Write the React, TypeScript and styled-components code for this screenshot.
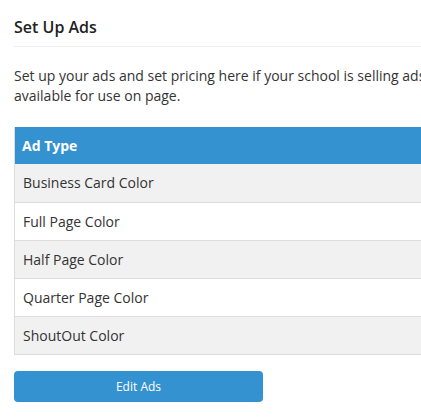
import React from "react";
import styled, { createGlobalStyle } from "styled-components";

const Global = createGlobalStyle`
  html, body { margin: 0; padding: 0; background: #fff; overflow: hidden; }
  body { font-family: "Open Sans", "Liberation Sans", sans-serif; }
`;

const Page = styled.div`
  width: 640px;
  padding: 16px 0 0 14px;
  box-sizing: border-box;
`;

const Title = styled.h2`
  margin: 0;
  font-size: 16px;
  line-height: 22px;
  font-weight: 600;
  color: #222;
`;

const Divider = styled.hr`
  margin: 8px 0 0 0;
  border: 0;
  border-top: 1px solid #eeeeee;
`;

const Intro = styled.p`
  margin: 19px 0 0 0;
  font-size: 14px;
  line-height: 20px;
  color: #333;
`;

const Table = styled.table`
  margin-top: 21px;
  width: 100%;
  border-collapse: collapse;
  border-left: 1px solid #dddddd;
  font-size: 14px;
  color: #333;
`;

const HeadCell = styled.th`
  background: #3592d0;
  color: #fff;
  font-weight: 700;
  text-align: left;
  height: 37px;
  padding: 0 7px;
  box-sizing: border-box;
`;

const Row = styled.tr<{ $shade: boolean }>`
  background: ${(p) => (p.$shade ? "#f1f1f1" : "#ffffff")};
  border-bottom: 1px solid #dddddd;
`;

const Cell = styled.td`
  height: 38px;
  padding: 0 8px;
  box-sizing: border-box;
`;

const Button = styled.button`
  display: block;
  margin-top: 16px;
  width: 249px;
  height: 31px;
  border: 0;
  border-radius: 4px;
  background: #3592d0;
  color: #fff;
  font-family: "Open Sans", "Liberation Sans", sans-serif;
  font-size: 12px;
  cursor: pointer;
`;

const adTypes = [
  "Business Card Color",
  "Full Page Color",
  "Half Page Color",
  "Quarter Page Color",
  "ShoutOut Color",
];

export default function App() {
  return (
    <>
      <Global />
      <Page>
        <Title>Set Up Ads</Title>
        <Divider />
        <Intro>
          Set up your ads and set pricing here if your school is selling ads, and make them
          <br />
          available for use on page.
        </Intro>
        <Table>
          <thead>
            <tr>
              <HeadCell>Ad Type</HeadCell>
            </tr>
          </thead>
          <tbody>
            {adTypes.map((t, i) => (
              <Row key={t} $shade={i % 2 === 0}>
                <Cell>{t}</Cell>
              </Row>
            ))}
          </tbody>
        </Table>
        <Button>Edit Ads</Button>
      </Page>
    </>
  );
}
